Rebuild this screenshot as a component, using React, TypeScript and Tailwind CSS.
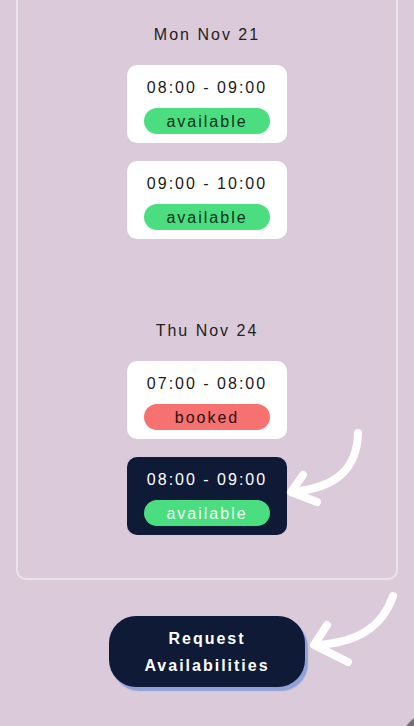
import React from 'react';

type Slot = { time: string; status: 'available' | 'booked'; selected?: boolean };
type Day = { label: string; slots: Slot[] };

const days: Day[] = [
  {
    label: 'Mon Nov 21',
    slots: [
      { time: '08:00 - 09:00', status: 'available' },
      { time: '09:00 - 10:00', status: 'available' },
    ],
  },
  {
    label: 'Thu Nov 24',
    slots: [
      { time: '07:00 - 08:00', status: 'booked' },
      { time: '08:00 - 09:00', status: 'available', selected: true },
    ],
  },
];

const SlotCard: React.FC<{ slot: Slot }> = ({ slot }) => {
  const pill =
    slot.status === 'booked'
      ? 'bg-[#f87171] text-[#2a1212]'
      : slot.selected
      ? 'bg-[#4ade80] text-[#effaf2]'
      : 'bg-[#4ade80] text-[#12301c]';
  return (
    <div
      className={`w-[160px] h-[78px] rounded-[10px] pt-[11px] px-[17px] flex flex-col items-center gap-[8px] ${
        slot.selected ? 'bg-[#0f1a37] text-white' : 'bg-white text-[#1a1a1a]'
      }`}
    >
      <div className="text-[16px] leading-[24px] tracking-[2px]">{slot.time}</div>
      <div className={`w-full h-[26px] rounded-full flex items-center justify-center pt-[2px] text-[16px] leading-[24px] tracking-[2px] ${pill}`}>
        {slot.status}
      </div>
    </div>
  );
};

const App: React.FC = () => {
  return (
    <div
      className="relative min-h-screen overflow-hidden bg-[#dbcad9]"
      style={{ fontFamily: '"Liberation Sans", Arial, sans-serif' }}
    >
      {/* Calendar panel (scrolled, top edge out of view) */}
      <div className="mx-4 border-2 border-t-0 border-[#ece2eb] rounded-b-[10px] pt-[23px] pb-[43px] flex flex-col gap-[80px]">
        {days.map((day) => (
          <div key={day.label} className="flex flex-col items-center">
            <div className="text-[16px] leading-[24px] tracking-[2px] text-[#222]">{day.label}</div>
            <div className="mt-[18px] flex flex-col items-center gap-[18px]">
              {day.slots.map((s, i) => (
                <SlotCard key={i} slot={s} />
              ))}
            </div>
          </div>
        ))}
      </div>

      <div className="flex justify-center mt-[36px]">
        <button className="w-[196px] rounded-[27px] bg-[#0f1a37] pt-[9px] pb-[8px] text-white font-bold text-[16px] leading-[27px] tracking-[2px] shadow-[3px_4px_1px_#8fa2d8]">
          Request
          <br />
          Availabilities
        </button>
      </div>

      {/* Hand-drawn arrows */}
      <svg className="absolute left-0 top-0 pointer-events-none" width="414" height="726" fill="none" stroke="white" strokeWidth="8" strokeLinecap="round" strokeLinejoin="round">
        <path d="M358 433 C357 470 335 488 292 492" />
        <path d="M303 475 L291 492 L317 502" />
        <path d="M393 596 C383 625 360 643 316 645" />
        <path d="M327 625 L314 645 L348 662" />
      </svg>

      {/* Floating circle, mostly off-screen */}
      <div className="absolute right-[-33px] bottom-[-33px] w-[44px] h-[44px] rounded-full bg-[#6f6f6f] border border-[#9a9a9a]" />
    </div>
  );
};

export default App;
